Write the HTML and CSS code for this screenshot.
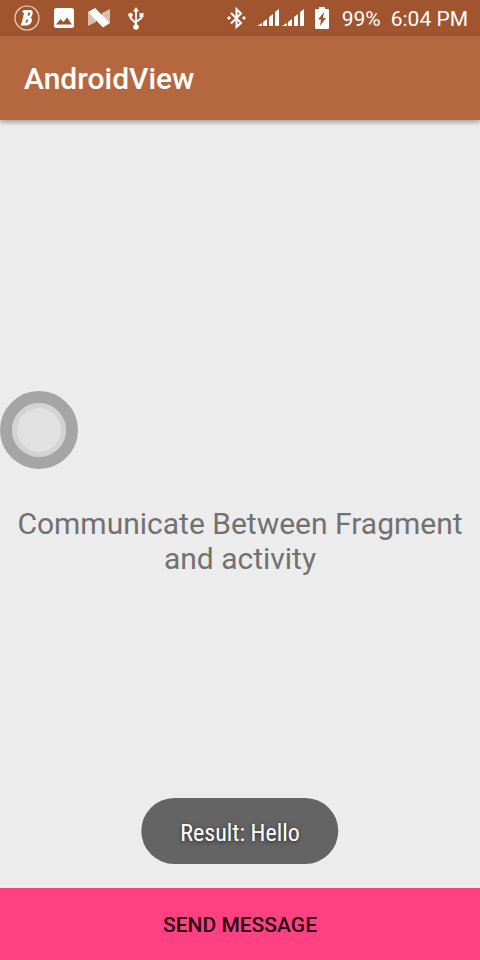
FILE: index.html
```html
<!DOCTYPE html>
<html lang="en">
<head>
<meta charset="utf-8">
<meta name="viewport" content="width=device-width, initial-scale=1">
<title>AndroidView</title>
<link rel="stylesheet" href="styles.css">
</head>
<body>
<div class="status-bar">
  <div class="notifications">
    <svg width="26" height="26" viewBox="0 0 26 26" aria-hidden="true">
      <circle cx="13" cy="13" r="12" fill="none" stroke="#ecd9cf" stroke-width="1.200"/>
      <path fill="#fff" fill-rule="evenodd" d="M9.500 5H15.500C18.500 5 19 7 18.500 9C18 11 17.500 12 16.500 12.500C18.500 13.500 18.200 16 17 18C15.500 20 13.500 20.500 11 20.500H6.500L8 17L10 8L8 7ZM14.500 7.500L13.500 11C15 11 16 10 16 8.700C16 7.700 15.500 7 14.500 7.500ZM12.500 14.500L11.500 18C13 18 14 16.500 14 15.500C14 14.500 13.500 14 12.500 14.500Z"/>
    </svg>
    <svg width="20" height="20" viewBox="0 0 20 20" aria-hidden="true">
      <path fill="#fff" fill-rule="evenodd" d="M2.500 0H17.500Q20 0 20 2.500V17.500Q20 20 17.500 20H2.500Q0 20 0 17.500V2.500Q0 0 2.500 0ZM2 16.500H18L13 9.500L9.500 14L6.500 11Z"/>
    </svg>
    <svg width="22" height="20" viewBox="0 0 22 20" aria-hidden="true">
      <path fill="#dcbcae" d="M0 4L8 8V14L0 18ZM14 5L22 1V15L14 10Z"/>
      <path fill="#fff" d="M0 4L7 0L22 15L15 19.500Z"/>
    </svg>
    <svg class="usb" width="16" height="24" viewBox="0 0 16 24" aria-hidden="true">
      <path fill="none" stroke="#fff" stroke-width="1.800" d="M8 4V20M2.500 9V12L8 17.500M13.500 8V12L8 16"/>
      <path fill="#fff" d="M8 1L11 5.500H5Z"/>
      <circle cx="8" cy="21" r="2.800" fill="#fff"/>
      <circle cx="2.500" cy="9" r="2.300" fill="#fff"/>
      <path fill="#fff" d="M11.500 7H15.500V11H11.500Z"/>
    </svg>
  </div>
  <div class="system">
    <svg width="20" height="22" viewBox="0 0 20 22" aria-hidden="true">
      <path fill="none" stroke="#fff" stroke-width="2" d="M4 6L14 16L9.500 20V2L14 6.500L4 16.500"/>
      <path fill="#fff" d="M2 9L4 11L2 13L0 11ZM17 9L19 11L17 13L15 11Z"/>
    </svg>
    <svg width="48" height="18" viewBox="0 0 48 18" aria-hidden="true">
      <path fill="#fff" d="M0 17L5 14V17ZM6 13L10 10V17H6ZM12 8L16 5V17H12ZM18 3L22 0V17H18ZM25 17L30 14V17ZM31 13L35 10V17H31ZM37 8L41 5V17H37ZM43 3L47 0V17H43Z"/>
    </svg>
    <svg width="14" height="22" viewBox="0 0 14 22" aria-hidden="true">
      <path fill="#fff" fill-rule="evenodd" d="M4 0H10V2H13Q14 2 14 3V21Q14 22 13 22H1Q0 22 0 21V3Q0 2 1 2H4ZM9 5L3 12.500H6L5 19L11 11H8Z"/>
    </svg>
    <span class="battery">99%</span>
    <time>6:04 PM</time>
  </div>
</div>
<header class="app-bar"><h1>AndroidView</h1></header>
<main class="content">
  <p>Communicate Between Fragment and activity</p>
</main>
<button class="send" type="button">SEND MESSAGE</button>
<button class="assist" type="button" aria-label="Assistive touch"></button>
<div class="toast" role="status">Result: Hello</div>
</body>
</html>
```
FILE: styles.css
```css
* {
  box-sizing: border-box;
}

body {
  margin: 0;
  min-height: 100vh;
  display: flex;
  flex-direction: column;
  position: relative;
  background: #ececec;
  font-family: Roboto, sans-serif;
}

svg {
  display: block;
  flex: none;
}

.status-bar {
  height: 36px;
  padding: 0 12px 0 14px;
  display: flex;
  align-items: center;
  justify-content: space-between;
  background: #a0552f;
  color: #fff;
  font-size: 21px;
  line-height: 24px;
  white-space: nowrap;
}

.notifications,
.system {
  display: flex;
  align-items: center;
}

.notifications {
  gap: 14px;
}

.usb {
  margin-left: 4px;
}

.system {
  gap: 10px;
}

.battery,
time {
  padding-top: 2px;
}

.battery {
  margin-left: 3px;
}

.app-bar {
  height: 84px;
  padding: 2px 24px 0;
  display: flex;
  align-items: center;
  background: #b5683f;
  color: #fff;
  box-shadow: 0 2px 5px rgba(0, 0, 0, 0.35);
}

h1 {
  margin: 0;
  font-size: 30px;
  line-height: 36px;
  font-weight: 500;
}

.content {
  flex: 1;
  padding: 74px 12px 0;
  display: flex;
  align-items: center;
  justify-content: center;
}

.content p {
  margin: 0;
  color: #717171;
  font-size: 30px;
  line-height: 35px;
  text-align: center;
}

.send {
  height: 72px;
  padding: 2px 16px 0;
  border: 0;
  background: #ff4081;
  color: #260a13;
  font: 500 21px/24px Roboto, sans-serif;
}

.assist {
  position: absolute;
  left: 0;
  top: 391px;
  width: 78px;
  height: 78px;
  padding: 0;
  border: 12px solid #a5a5a5;
  border-radius: 50%;
  background: #e1e1e1;
  background-clip: padding-box;
  box-shadow: inset 0 0 0 5px #d3d3d3;
}

.toast {
  position: absolute;
  bottom: 96px;
  left: 50%;
  transform: translateX(-50%);
  padding: 21px 39px 17px;
  border-radius: 33px;
  background: #646464;
  color: #fff;
  font-family: "Roboto Condensed", Roboto, sans-serif;
  font-size: 24px;
  line-height: 28px;
  white-space: nowrap;
  text-shadow: 0 1px 4px rgba(0, 0, 0, 0.6);
}
```
